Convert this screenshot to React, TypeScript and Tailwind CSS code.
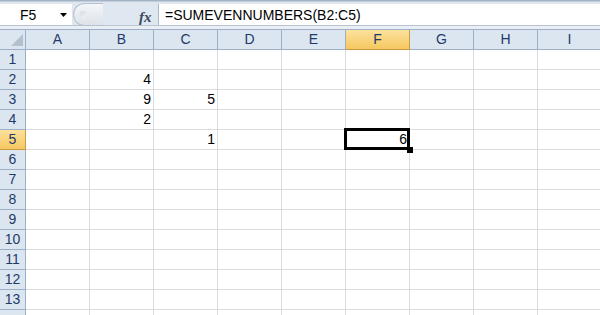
import React from "react";

const cols = ["A", "B", "C", "D", "E", "F", "G", "H", "I"];
const rows = Array.from({ length: 14 }, (_, i) => i + 1);
const data: Record<string, string> = {
  B2: "4",
  B3: "9",
  C3: "5",
  B4: "2",
  C5: "1",
  F5: "6",
};

export default function App() {
  const font = { fontFamily: '"Liberation Sans", Arial, sans-serif' };
  return (
    <div className="w-[600px] h-[315px] overflow-hidden bg-white" style={font}>
      {/* top band */}
      <div className="h-[1px] bg-[#a5b3c6]" />
      <div className="h-[1px] bg-[#c3cedc]" />
      <div className="h-[2px] bg-[#dfe6ee]" />
      {/* formula bar */}
      <div className="flex h-[21px] bg-[#dfe7f1]">
        <div className="w-[72px] bg-white flex items-center relative">
          <span className="ml-[20px] text-[14px] text-black leading-none">F5</span>
          <svg className="absolute left-[60px] top-[9px]" width="7" height="4" viewBox="0 0 7 4">
            <path d="M0 0H7L3.5 4Z" fill="#000" />
          </svg>
        </div>
        <div className="w-[86px] flex items-center relative">
          <div className="absolute left-[1px] top-[-1px] h-[23px] w-[30px] rounded-l-full border border-r-0 border-[#b6c2d1] bg-gradient-to-b from-[#f4f6f9] to-[#dde3ea]" />
          <div className="absolute left-[7px] top-[6px] w-[9px] h-[9px] rounded-full bg-gradient-to-br from-[#d5dbe2] to-[#f2f4f7] border border-[#e8ecf0]" />
          <span
            className="absolute left-[67px] top-[2px] text-[15px] italic font-bold text-[#3a4a60]"
            style={{ fontFamily: '"Liberation Serif", serif' }}
          >
            fx
          </span>
        </div>
        <div className="flex-1 bg-white border-l border-[#aab6c6] flex items-center">
          <span className="ml-[6px] text-[14px] text-black leading-none">=SUMEVENNUMBERS(B2:C5)</span>
        </div>
      </div>
      <div className="h-[1px] bg-[#b9c5d3]" />
      <div className="h-[3px] bg-[#eaeff6]" />
      {/* grid */}
      <div
        className="grid border-t border-[#9eb0c7]"
        style={{ gridTemplateColumns: "26px repeat(9, 64px)", gridAutoRows: "20px" }}
      >
        <div className="bg-[#dce6f1] border-r border-b border-[#9eb0c7] relative">
          <svg className="absolute right-[2px] bottom-[3px]" width="12" height="12" viewBox="0 0 12 12">
            <path d="M12 0V12H0Z" fill="#b4c0cd" />
          </svg>
        </div>
        {cols.map((c) => (
          <div
            key={c}
            className={
              c === "F"
                ? "bg-gradient-to-b from-[#fbe29c] to-[#f6c75e] border-r border-b border-[#c99b42] flex items-center justify-center text-[14px] text-[#1f3a68]"
                : "bg-[#dce6f1] border-r border-b border-[#9eb0c7] flex items-center justify-center text-[14px] text-[#1f3a68]"
            }
          >
            {c}
          </div>
        ))}
        {rows.map((r) => (
          <React.Fragment key={r}>
            <div
              className={
                r === 5
                  ? "bg-gradient-to-b from-[#fbe29c] to-[#f6c75e] border-r border-b border-[#c99b42] flex items-center justify-center text-[14px] text-[#1f3a68]"
                  : "bg-[#dce6f1] border-r border-b border-[#9eb0c7] flex items-center justify-center text-[14px] text-[#1f3a68]"
              }
            >
              {r < 14 ? r : ""}
            </div>
            {cols.map((c) => {
              const key = `${c}${r}`;
              const v = data[key];
              const sel = key === "F5";
              return (
                <div
                  key={key}
                  className="border-r border-b border-[#dadcdd] relative flex items-center justify-end pr-[2px] text-[14px] text-black"
                >
                  {sel && (
                    <>
                      <div className="absolute z-10 left-[-2px] top-[-2px] right-[-1px] bottom-[-1px] border-[3px] border-black" />
                      <div className="absolute z-10 right-[-4px] bottom-[-4px] w-[6px] h-[6px] bg-black" />
                    </>
                  )}
                  <span className="relative">{v}</span>
                </div>
              );
            })}
          </React.Fragment>
        ))}
      </div>
    </div>
  );
}
